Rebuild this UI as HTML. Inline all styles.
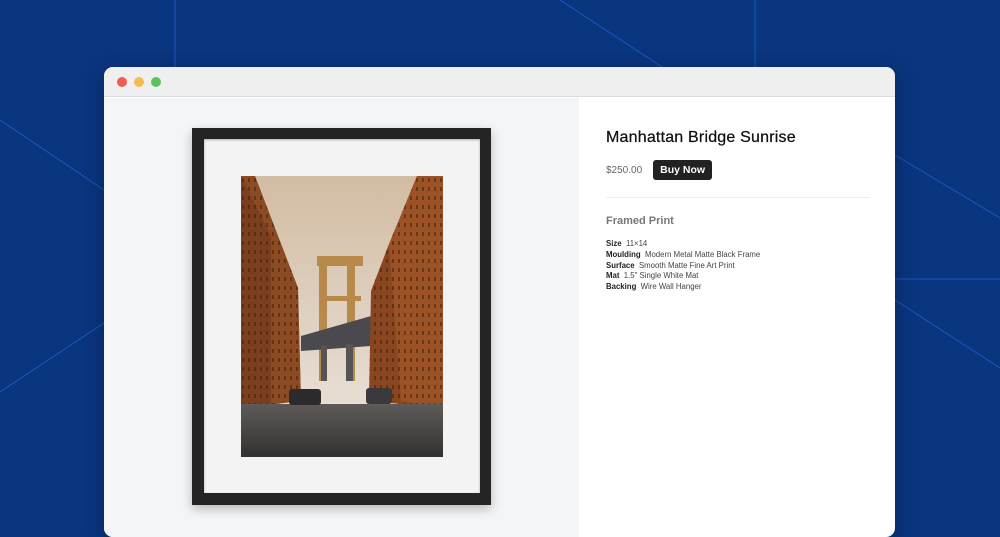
<!DOCTYPE html>
<html><head><meta charset="utf-8"><style>
*{margin:0;padding:0;box-sizing:border-box}
body{width:1000px;height:525px;overflow:hidden;background:#0a357f;font-family:"Liberation Sans",sans-serif;position:relative}
.bg{position:absolute;left:0;top:0}
.win{position:absolute;left:104px;top:67px;width:791px;height:470px;border-radius:9px;overflow:hidden;background:#fff;box-shadow:0 4px 20px rgba(0,0,0,.3)}
.bar{height:30px;background:#efeff0;border-bottom:1px solid #dcdcdc;position:relative}
.dot{position:absolute;top:10px;width:10px;height:10px;border-radius:50%}
.left{position:absolute;left:0;top:31px;width:475px;height:440px;background:#f4f5f7}
.frame{position:absolute;left:88px;top:30px;width:299px;height:377px;background:#242424;box-shadow:0 4px 10px rgba(0,0,0,.25)}
.mat{position:absolute;left:12px;top:11px;right:11px;bottom:12px;background:#f3f3f3;box-shadow:inset 0 1px 2px rgba(0,0,0,.3)}
.photo{position:absolute;left:37px;top:37px;width:202px;height:281px}
.right{position:absolute;left:502px;top:31px;color:#222}
h1{font-size:16px;font-weight:normal;margin-top:31px;letter-spacing:.2px;color:#111;-webkit-text-stroke:.25px #111}
.pr{margin-top:13px;display:flex;align-items:center;font-size:10px;color:#666}
.btn{margin-left:11px;background:#222;color:#fff;font-size:10.5px;font-weight:bold;padding:4px 7px;border-radius:3px}
hr{border:0;border-top:1px solid #eee;width:264px;margin-top:17px}
h2{font-size:11px;color:#777;margin-top:17px;font-weight:bold}
.sp{margin-top:12px;font-size:7.8px;line-height:10.8px;color:#444}
.sp b{color:#222}
</style></head><body>
<svg class="bg" width="1000" height="525">
<g stroke="#1f5bc4" stroke-width="1" fill="none" opacity=".9">
<line x1="175" y1="0" x2="175" y2="67"/>
<line x1="560" y1="0" x2="662" y2="67"/>
<line x1="755" y1="0" x2="755" y2="67"/>
<line x1="0" y1="120" x2="104" y2="190"/>
<line x1="0" y1="392" x2="104" y2="323"/>
<line x1="895" y1="155" x2="1000" y2="218"/>
<line x1="895" y1="279" x2="1000" y2="279"/>
<line x1="895" y1="300" x2="1000" y2="368"/>
</g></svg>
<div class="win">
<div class="bar"><div class="dot" style="left:13px;background:#ef5a55"></div><div class="dot" style="left:30px;background:#f5bb4f"></div><div class="dot" style="left:47px;background:#5ac35c"></div></div>
<div class="left"><div class="frame"><div class="mat">
<svg class="photo" viewBox="0 0 202 281" preserveAspectRatio="none">
<defs><linearGradient id="sky" x1="0" y1="0" x2="0" y2="1"><stop offset="0" stop-color="#d2bca3"/><stop offset="1" stop-color="#ece6df"/></linearGradient>
<linearGradient id="st" x1="0" y1="0" x2="0" y2="1"><stop offset="0" stop-color="#5e5a58"/><stop offset="1" stop-color="#333231"/></linearGradient>
<pattern id="win" width="6" height="9" patternUnits="userSpaceOnUse"><rect width="6" height="9" fill="none"/><rect x="1" y="2" width="2" height="4" fill="#3a1c0c" opacity=".5"/></pattern></defs>
<rect width="202" height="281" fill="url(#sky)"/>
<g fill="#b78a4c"><rect x="78" y="80" width="8" height="125"/><rect x="106" y="83" width="8" height="122"/><rect x="76" y="80" width="46" height="10"/><rect x="80" y="120" width="40" height="5"/></g>
<path d="M60 160 L130 140 L130 170 L60 175Z" fill="#4a4a4e"/>
<rect x="80" y="170" width="6" height="35" fill="#555"/><rect x="105" y="168" width="7" height="37" fill="#555"/>
<path d="M0 0 L14 0 L57 112 L60 225 L0 232Z" fill="#7a3f1f"/>
<path d="M0 0 L14 0 L57 112 L60 225 L30 228 L30 60Z" fill="#9a5428" opacity=".6"/>
<path d="M0 0 L14 0 L57 112 L60 225 L0 232Z" fill="url(#win)"/>
<path d="M202 0 L176 0 L148 68 L130 115 L128 225 L202 232Z" fill="#8a4620"/>
<path d="M202 0 L176 0 L148 68 L160 225 L202 232Z" fill="#a65a2a" opacity=".6"/>
<path d="M202 0 L176 0 L148 68 L130 115 L128 225 L202 232Z" fill="url(#win)"/>
<path d="M0 228 L202 228 L202 281 L0 281Z" fill="url(#st)"/>
<rect x="48" y="213" width="32" height="16" rx="3" fill="#2b2b2e"/>
<rect x="125" y="212" width="26" height="16" rx="3" fill="#3a3a3d"/>
</svg>
</div></div></div>
<div class="right">
<h1>Manhattan Bridge Sunrise</h1>
<div class="pr">$250.00<span class="btn">Buy Now</span></div>
<hr>
<h2>Framed Print</h2>
<div class="sp"><b>Size</b>&nbsp; 11×14<br><b>Moulding</b>&nbsp; Modern Metal Matte Black Frame<br><b>Surface</b>&nbsp; Smooth Matte Fine Art Print<br><b>Mat</b>&nbsp; 1.5" Single White Mat<br><b>Backing</b>&nbsp; Wire Wall Hanger</div>
</div>
</div>
</body></html>
